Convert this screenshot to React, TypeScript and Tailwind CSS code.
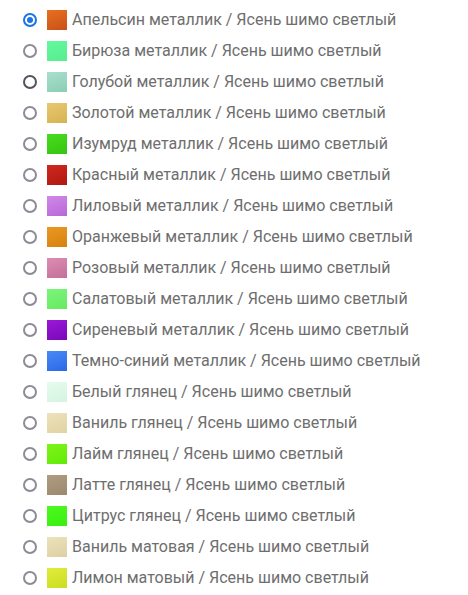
import { useState } from 'react';

const items: { name: string; from: string; to: string }[] = [
    { name: 'Апельсин металлик', from: '#e8701e', to: '#c8501a' },
    { name: 'Бирюза металлик', from: '#66f7a0', to: '#55ee8e' },
    { name: 'Голубой металлик', from: '#a8dfcc', to: '#8ccdb4' },
    { name: 'Золотой металлик', from: '#e8c870', to: '#d6b252' },
    { name: 'Изумруд металлик', from: '#48dc1e', to: '#36c412' },
    { name: 'Красный металлик', from: '#d0281e', to: '#b01812' },
    { name: 'Лиловый металлик', from: '#d088e8', to: '#b868d8' },
    { name: 'Оранжевый металлик', from: '#e89a22', to: '#d88010' },
    { name: 'Розовый металлик', from: '#dc8cb4', to: '#c47098' },
    { name: 'Салатовый металлик', from: '#7cf47a', to: '#66ea62' },
    { name: 'Сиреневый металлик', from: '#9a18d8', to: '#7a08b8' },
    { name: 'Темно-синий металлик', from: '#4a8af4', to: '#2a68e8' },
    { name: 'Белый глянец', from: '#e6fbee', to: '#d4f4e0' },
    { name: 'Ваниль глянец', from: '#ede2bc', to: '#e0d2a2' },
    { name: 'Лайм глянец', from: '#7cf418', to: '#64ea08' },
    { name: 'Латте глянец', from: '#b09c80', to: '#9c886c' },
    { name: 'Цитрус глянец', from: '#4cfa1e', to: '#3aee10' },
    { name: 'Ваниль матовая', from: '#ece2bc', to: '#dcd0a4' },
    { name: 'Лимон матовый', from: '#e0ec3c', to: '#ccdc22' },
];

export default function App() {
    const [selected, setSelected] = useState(0);

    return (
        <div className="min-h-screen bg-white pt-[4px] pl-[23px] font-['Roboto',sans-serif]">
            {items.map((item, i) => (
                <label
                    key={item.name}
                    onClick={() => setSelected(i)}
                    className="flex items-center h-[31px] cursor-pointer"
                >
                    <span
                        className={`flex items-center justify-center w-[14px] h-[14px] rounded-full border-2 ${
                            i === selected
                                ? 'border-[#1a73e8]'
                                : i === 2
                                ? 'border-[#55525e]'
                                : 'border-[#8e8a96]'
                        }`}
                    >
                        {i === selected && <span className="w-[6px] h-[6px] rounded-full bg-[#1a73e8]" />}
                    </span>
                    <span
                        className="ml-[10px] w-[20px] h-[20px] shrink-0"
                        style={{ background: `linear-gradient(160deg, ${item.from}, ${item.to})` }}
                    />
                    <span className="ml-[5px] text-[16px] text-[#6e6e6e] whitespace-nowrap">
                        {item.name} / Ясень шимо светлый
                    </span>
                </label>
            ))}
        </div>
    );
}
